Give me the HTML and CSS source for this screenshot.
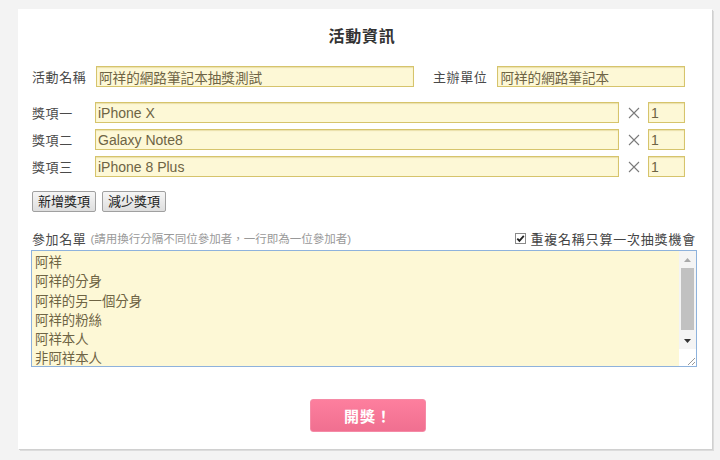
FILE: index.html
```html
<!DOCTYPE html>
<html lang="zh-Hant">
<head>
<meta charset="utf-8">
<title>活動資訊</title>
<link rel="stylesheet" href="styles.css">
</head>
<body>
<div class="panel">
  <h1 class="title">活動資訊</h1>
  <div class="row row-info">
    <label class="lbl">活動名稱</label>
    <input class="field f-name" value="阿祥的網路筆記本抽獎測試">
    <label class="lbl lbl-host">主辦單位</label>
    <input class="field f-host" value="阿祥的網路筆記本">
  </div>
  <div class="prizes">
    <div class="row prize">
      <label class="lbl lbl-prize">獎項一</label>
      <input class="field f-prize" value="iPhone X">
      <span class="times"><svg width="12" height="12" viewBox="0 0 12 12"><path d="M1 1 L11 11 M11 1 L1 11" stroke="#7a7a7a" stroke-width="1.1"/></svg></span>
      <input class="field f-qty" value="1">
    </div>
    <div class="row prize">
      <label class="lbl lbl-prize">獎項二</label>
      <input class="field f-prize" value="Galaxy Note8">
      <span class="times"><svg width="12" height="12" viewBox="0 0 12 12"><path d="M1 1 L11 11 M11 1 L1 11" stroke="#7a7a7a" stroke-width="1.1"/></svg></span>
      <input class="field f-qty" value="1">
    </div>
    <div class="row prize">
      <label class="lbl lbl-prize">獎項三</label>
      <input class="field f-prize" value="iPhone 8 Plus">
      <span class="times"><svg width="12" height="12" viewBox="0 0 12 12"><path d="M1 1 L11 11 M11 1 L1 11" stroke="#7a7a7a" stroke-width="1.1"/></svg></span>
      <input class="field f-qty" value="1">
    </div>
  </div>
  <div class="btns">
    <button class="btn">新增獎項</button>
    <button class="btn">減少獎項</button>
  </div>
  <div class="list-head">
    <span class="lbl">參加名單</span>
    <span class="hint">(請用換行分隔不同位參加者，一行即為一位參加者)</span>
    <label class="chk">
      <svg class="box" width="11" height="11" viewBox="0 0 11 11"><rect x="0.5" y="0.5" width="10" height="10" fill="#fff" stroke="#8a8a8a"/><path d="M2.3 5.6 L4.4 7.8 L8.8 2.8" fill="none" stroke="#222" stroke-width="1.8"/></svg>
      重複名稱只算一次抽獎機會
    </label>
  </div>
  <div class="ta-wrap">
    <textarea class="ta">阿祥
阿祥的分身
阿祥的另一個分身
阿祥的粉絲
阿祥本人
非阿祥本人</textarea>
    <div class="sb">
      <div class="sb-up"><svg width="7" height="4" viewBox="0 0 7 4"><path d="M0 4 L3.5 0 L7 4 Z" fill="#a9a9a9"/></svg></div>
      <div class="sb-track"><div class="sb-thumb"></div></div>
      <div class="sb-down"><svg width="7" height="4" viewBox="0 0 7 4"><path d="M0 0 L3.5 4 L7 0 Z" fill="#333"/></svg></div>
      <div class="sb-corner"><svg width="9" height="9" viewBox="0 0 9 9"><path d="M9 2 L2 9 M9 6 L6 9" stroke="#999" stroke-width="1"/></svg></div>
    </div>
  </div>
  <div class="go-row">
    <button class="go">開獎！</button>
  </div>
</div>
</body>
</html>
```
FILE: styles.css
```css
html, body { margin: 0; padding: 0; }
body {
  background: #f3f3f3;
  font-family: "Liberation Sans", Arial, "Noto Sans CJK TC", sans-serif;
  color: #444;
  width: 720px;
  height: 460px;
  overflow: hidden;
}
.panel {
  margin: 9px 0 0 18px;
  width: 694px;
  height: 440px;
  background: #fff;
  box-shadow: 1px 1px 0 #d0d0d0, 2px 2px 0 #dcdcdc;
  box-sizing: border-box;
  padding: 18px 0 0 14px;
  display: flex;
  flex-direction: column;
}
.title {
  margin: 0;
  text-align: center;
  font-size: 16px;
  font-weight: bold;
  letter-spacing: 0.7px;
  color: #333;
  line-height: 20px;
  padding-right: 20px;
}
.row { display: flex; align-items: center; }
.row-info { margin-top: 19px; }
.lbl {
  font-size: 13px;
  letter-spacing: 0.6px;
  color: #4a4a4a;
}
.row-info .lbl { width: 64px; flex: none; }
.row-info .lbl-host { width: auto; margin-left: 19px; margin-right: 10px; }
.field {
  box-sizing: border-box;
  height: 21px;
  border: 1px solid #d6c46c;
  background: #fdf8d6;
  box-shadow: inset 0 1px 1px rgba(200,180,90,0.35);
  font-family: "Liberation Sans", Arial, "Noto Sans CJK TC", sans-serif;
  font-size: 14px;
  color: #6e6444;
  padding: 0 2px;
  margin: 0;
  outline: none;
}
.f-name { width: 318px; font-size: 13.6px; }
.f-host { width: 188px; font-size: 13.6px; }
.prizes { margin-top: 15px; display: flex; flex-direction: column; gap: 6px; }
.lbl-prize { width: 63px; flex: none; }
.f-prize { width: 524px; }
.times {
  width: 29px;
  height: 21px;
  display: flex;
  align-items: center;
  justify-content: center;
}
.times svg { display: block; }
.f-qty { width: 37px; }
.btns { margin-top: 14px; display: flex; gap: 6px; }
.btn {
  height: 21px;
  box-sizing: border-box;
  padding: 0 5px;
  border: 1px solid #a0a0a0;
  border-radius: 2px;
  background: linear-gradient(#f6f6f6, #dedede);
  font-family: "Liberation Sans", Arial, "Noto Sans CJK TC", sans-serif;
  font-size: 13px;
  color: #222;
  line-height: 19px;
  margin: 0;
}
.list-head {
  margin-top: 18px;
  display: flex;
  align-items: center;
  height: 16px;
  padding-right: 16px;
}
.hint {
  font-size: 11.5px;
  color: #999;
  margin-left: 4px;
}
.chk {
  margin-left: auto;
  font-size: 13px;
  letter-spacing: 0.8px;
  color: #444;
  display: flex;
  align-items: center;
  gap: 4px;
}
.box { display: block; }
.ta-wrap {
  margin-top: 4px;
  margin-left: -1px;
  width: 666px;
  height: 117px;
  position: relative;
}
.ta {
  box-sizing: border-box;
  width: 666px;
  height: 117px;
  display: block;
  margin: 0;
  border: 1px solid #8eb2dc;
  background: #fdf8d6;
  font-family: "Liberation Sans", Arial, "Noto Sans CJK TC", sans-serif;
  font-size: 13.4px;
  line-height: 19.3px;
  color: #6e6444;
  padding: 2px 20px 0 3px;
  overflow: hidden;
  resize: none;
  outline: none;
}
.sb {
  position: absolute;
  top: 1px;
  right: 1px;
  bottom: 1px;
  width: 17px;
  background: #f4f4f4;
  display: flex;
  flex-direction: column;
}
.sb-up, .sb-down {
  height: 17px;
  display: flex;
  align-items: center;
  justify-content: center;
}
.sb-track { flex: 1; padding: 0 2px; }
.sb-thumb { margin-top: 0; height: 62px; background: #c1c1c1; }
.sb-corner {
  height: 17px;
  background: #fff;
  display: flex;
  align-items: flex-end;
  justify-content: flex-end;
  padding: 0 1px 1px 0;
  box-sizing: border-box;
}
.go-row { margin-top: 32px; display: flex; justify-content: center; padding-right: 8px; }
.go {
  width: 116px;
  height: 33px;
  box-sizing: border-box;
  border: 1px solid #f58aa6;
  border-radius: 3px;
  background: linear-gradient(#fd7f9e, #f06f90);
  color: #fff;
  font-family: "Liberation Sans", Arial, "Noto Sans CJK TC", sans-serif;
  font-size: 15px;
  font-weight: bold;
  letter-spacing: 1px;
  margin: 0;
}
```
